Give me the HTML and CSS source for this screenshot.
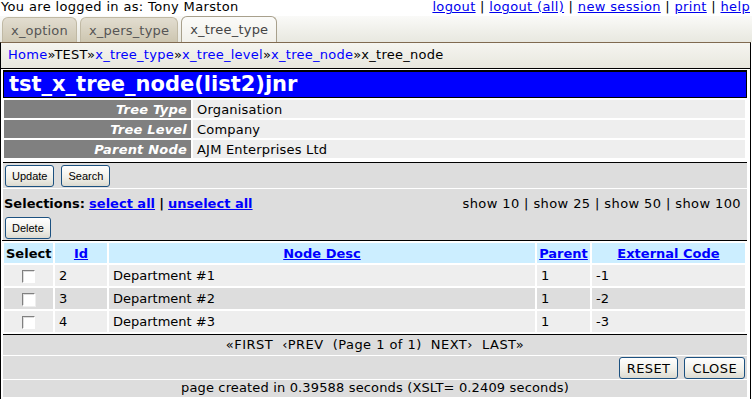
FILE: index.html
```html
<!DOCTYPE html>
<html lang="en">

<head>
    <meta charset="UTF-8">
    <title>tst_x_tree_node(list2)jnr</title>
    <link rel="stylesheet" href="styles.css">
</head>

<body>
    <div class="topbar">
        <span>You are logged in as: Tony Marston</span>
        <span class="toplinks">
            <a href="#">logout</a> | <a href="#">logout (all)</a> | <a href="#">new session</a> | <a href="#">print</a> | <a href="#">help</a>
        </span>
    </div>

    <div class="tabs">
        <span class="tab">x_option</span>
        <span class="tab">x_pers_type</span>
        <span class="tab active">x_tree_type</span>
    </div>

    <div class="crumbs">
        <a href="#">Home</a>»TEST»<a href="#">x_tree_type</a>»<a href="#">x_tree_level</a>»<a href="#">x_tree_node</a>»x_tree_node
    </div>

    <div class="main">
        <h1 class="title">tst_x_tree_node(list2)jnr</h1>

        <table class="details">
            <tr><th>Tree Type</th><td>Organisation</td></tr>
            <tr><th>Tree Level</th><td>Company</td></tr>
            <tr><th>Parent Node</th><td>AJM Enterprises Ltd</td></tr>
        </table>

        <div class="bar actions">
            <button class="btn">Update</button>
            <button class="btn">Search</button>
        </div>

        <div class="bar selections">
            <span class="sel"><b>Selections:</b> <a href="#">select all</a> <b>|</b> <a href="#">unselect all</a></span>
            <span class="show">show 10 | show 25 | show 50 | show 100</span>
        </div>
        <div class="bar deletebar">
            <button class="btn">Delete</button>
        </div>

        <table class="list">
            <thead>
                <tr>
                    <th class="c-sel">Select</th>
                    <th class="c-id"><a href="#">Id</a></th>
                    <th class="c-desc"><a href="#">Node Desc</a></th>
                    <th class="c-par"><a href="#">Parent</a></th>
                    <th class="c-ext"><a href="#">External Code</a></th>
                </tr>
            </thead>
            <tbody>
                <tr><td class="c-sel"><span class="check"></span></td><td>2</td><td>Department #1</td><td>1</td><td>-1</td></tr>
                <tr class="odd"><td class="c-sel"><span class="check"></span></td><td>3</td><td>Department #2</td><td>1</td><td>-2</td></tr>
                <tr><td class="c-sel"><span class="check"></span></td><td>4</td><td>Department #3</td><td>1</td><td>-3</td></tr>
            </tbody>
        </table>

        <div class="bar pager">«FIRST&nbsp; ‹PREV&nbsp; (Page 1 of 1)&nbsp; NEXT›&nbsp; LAST»</div>
        <div class="bar submit">
            <button class="btn big">RESET</button>
            <button class="btn big">CLOSE</button>
        </div>
        <div class="bar footer">page created in 0.39588 seconds (XSLT= 0.2409 seconds)</div>
    </div>
</body>

</html>
```

FILE: styles.css
```css
body {
    font-family: "DejaVu Sans", Verdana, sans-serif;
    font-size: 12px;
    margin: 0;
    background-color: #fff;
    color: #000;
    width: 752px;
}

a {
    color: #0000ff;
}

.topbar {
    display: flex;
    justify-content: space-between;
    height: 16px;
    line-height: 14px;
    padding: 0 2px 0 1px;
    font-size: 13px;
    letter-spacing: 0.35px;
}

.toplinks a {
    color: #0000ee;
}

.tabs {
    display: flex;
    gap: 3px;
    height: 26px;
    padding: 1px 0 0 2px;
    box-sizing: border-box;
    background: linear-gradient(#fafaf8, #efefe9 60%, #e8e8e0);
    align-items: flex-end;
}

.tab {
    height: 24px;
    line-height: 25px;
    padding: 0 8px;
    font-size: 13px;
    letter-spacing: 0.2px;
    color: #555;
    border: 1px solid #c0b9a4;
    border-bottom: none;
    border-radius: 6px 6px 0 0;
    background: linear-gradient(#e2ddd0, #cdc6b0);
}

.tab.active {
    color: #444;
    height: 25px;
    background: linear-gradient(#fbfbf9, #f1f0ea);
    border-color: #a8a08c;
}

.crumbs {
    height: 27px;
    line-height: 24px;
    padding: 0 7px;
    font-size: 13px;
    letter-spacing: 0.25px;
    border: 1px solid #000;
    border-top: 1px solid #806a50;
    background: linear-gradient(#f5f5f0, #e8e7de);
    box-sizing: border-box;
    margin-right: 1px;
}

.crumbs a {
    text-decoration: none;
}

.main {
    border: 1px solid #000;
    border-top: none;
    margin-right: 1px;
    padding: 1px 2px 0 2px;
    height: 331px;
    box-sizing: border-box;
}

.title {
    margin: 0;
    height: 28px;
    line-height: 25px;
    box-sizing: border-box;
    border: 1px solid #000;
    border-width: 2px 1px 1px 1px;
    background-color: #0000ff;
    color: #fff;
    font-size: 21px;
    font-weight: bold;
    padding: 0 5px;
    margin-right: 1px;
}

.details {
    width: 745px;
    border-spacing: 2px;
    margin: 0 0 2px -1px;
    font-size: 13px;
}

.details th {
    width: 179px;
    background-color: #808080;
    color: #fff;
    font-style: italic;
    text-align: right;
    padding: 0 4px;
    height: 18px;
    letter-spacing: 0.2px;
}

.details td {
    background-color: #eeeeee;
    padding: 0 4px;
    letter-spacing: 0.2px;
}

.bar {
    background-color: #dddddd;
    margin-right: 1px;
}

.actions {
    border-top: 1px solid #000;
    border-bottom: 1px solid #fff;
    padding: 2px 2px;
    display: flex;
    gap: 7px;
    height: 27px;
    box-sizing: border-box;
}

.btn {
    font-family: "Liberation Sans", Arial, sans-serif;
    font-size: 11px;
    height: 22px;
    padding: 0 6px;
    background: linear-gradient(#ffffff, #f0efe8 60%, #dcdad0);
    border: 1px solid #1c5180;
    border-radius: 3px;
    color: #000;
}

.btn.big {
    font-family: "DejaVu Sans", Verdana, sans-serif;
    font-size: 13px;
    letter-spacing: 0.4px;
    padding: 0 7px;
}

.selections {
    display: flex;
    justify-content: space-between;
    align-items: center;
    height: 26px;
    padding: 2px 6px 0 1px;
    box-sizing: border-box;
    font-size: 13px;
}

.show {
    letter-spacing: 0.4px;
}

.sel a {
    font-weight: bold;
}

.deletebar {
    padding: 2px 2px 0 2px;
    height: 25px;
    box-sizing: border-box;
}

.list {
    width: 745px;
    border-top: 1px solid #000;
    border-spacing: 2px;
    margin-left: -1px;
    font-size: 13px;
}

.list th {
    background-color: #cceeff;
    height: 20px;
    padding: 0;
    font-weight: bold;
}

.list th a {
    color: #0000ff;
}

.list th.c-sel {
    width: 47px;
    text-align: left;
    padding-left: 2px;
}

.c-id {
    width: 52px;
}

.c-par {
    width: 53px;
}

.c-ext {
    width: 153px;
}

.list td {
    background-color: #eeeeee;
    height: 21px;
    padding: 0 4px;
}

.list tr.odd td {
    background-color: #dddddd;
}

.list td.c-sel {
    text-align: center;
}

.check {
    display: inline-block;
    width: 11px;
    height: 11px;
    border: 1px solid;
    border-color: #808080 #fff #fff #808080;
    background-color: #fff;
    box-shadow: inset 1px 1px 0 #ddd, 1px 1px 0 #eee;
    vertical-align: middle;
}

.pager {
    border-top: 1px solid #000;
    border-bottom: 1px solid #fff;
    text-align: center;
    height: 22px;
    line-height: 20px;
    font-size: 13px;
    letter-spacing: 0.45px;
    box-sizing: border-box;
}

.submit {
    display: flex;
    justify-content: flex-end;
    gap: 6px;
    padding: 1px 2px 1px 0;
    height: 24px;
    border-bottom: 1px solid #fff;
    box-sizing: border-box;
}

.footer {
    text-align: center;
    height: 17px;
    line-height: 16px;
    font-size: 13px;
    letter-spacing: 0.15px;
}
```
